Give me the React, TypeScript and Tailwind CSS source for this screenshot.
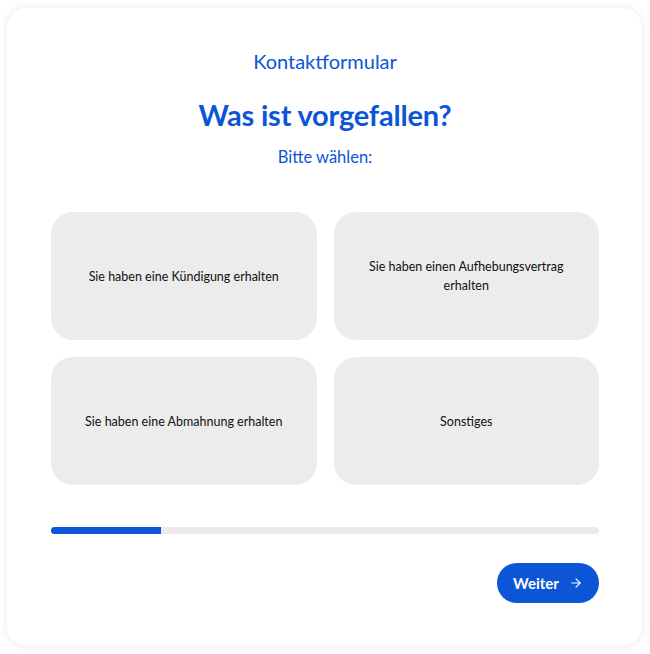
import { ArrowRight } from "lucide-react";

const options = [
  "Sie haben eine Kündigung erhalten",
  "Sie haben einen Aufhebungsvertrag erhalten",
  "Sie haben eine Abmahnung erhalten",
  "Sonstiges",
];

export default function App() {
  return (
    <div
      className="min-h-[654px] w-[650px] bg-white p-[8px] pl-[7px]"
      style={{ fontFamily: "Lato, 'Noto Sans', sans-serif" }}
    >
      {/* Card */}
      <div className="h-[638px] w-[635px] rounded-[20px] bg-white shadow-[0_0_8px_rgba(0,0,0,0.10)] pl-[44px] pr-[43px] pt-[41px]">
        <p className="text-center text-[20px] leading-[24px] text-[#0b55d6]">Kontaktformular</p>
        <h1 className="mt-[25px] text-center text-[29px] leading-[34px] font-bold tracking-[-0.2px] text-[#0b55d6]">
          Was ist vorgefallen?
        </h1>
        <p className="mt-[15px] text-center text-[16.5px] leading-[20px] text-[#0b55d6]">Bitte wählen:</p>

        <div className="mt-[45px] grid grid-cols-2 gap-x-[17px] gap-y-[17px]">
          {options.map((o) => (
            <button
              key={o}
              className="flex h-[128px] items-center justify-center rounded-[22px] bg-[#ececec] px-[22px] text-center text-[12.5px] leading-[19px] text-[#111]"
            >
              {o}
            </button>
          ))}
        </div>

        {/* Progress */}
        <div className="mt-[42px] h-[7px] w-full rounded-full bg-[#ebebeb]">
          <div className="h-full w-[20%] rounded-l-full bg-[#0b55d6]" />
        </div>

        <div className="mt-[29px] flex justify-end">
          <button className="flex h-[40px] w-[102px] items-center justify-center gap-[10px] rounded-full bg-[#0b55d6] text-[15px] font-bold text-white">
            Weiter
            <ArrowRight size={14} strokeWidth={2} />
          </button>
        </div>
      </div>
    </div>
  );
}
